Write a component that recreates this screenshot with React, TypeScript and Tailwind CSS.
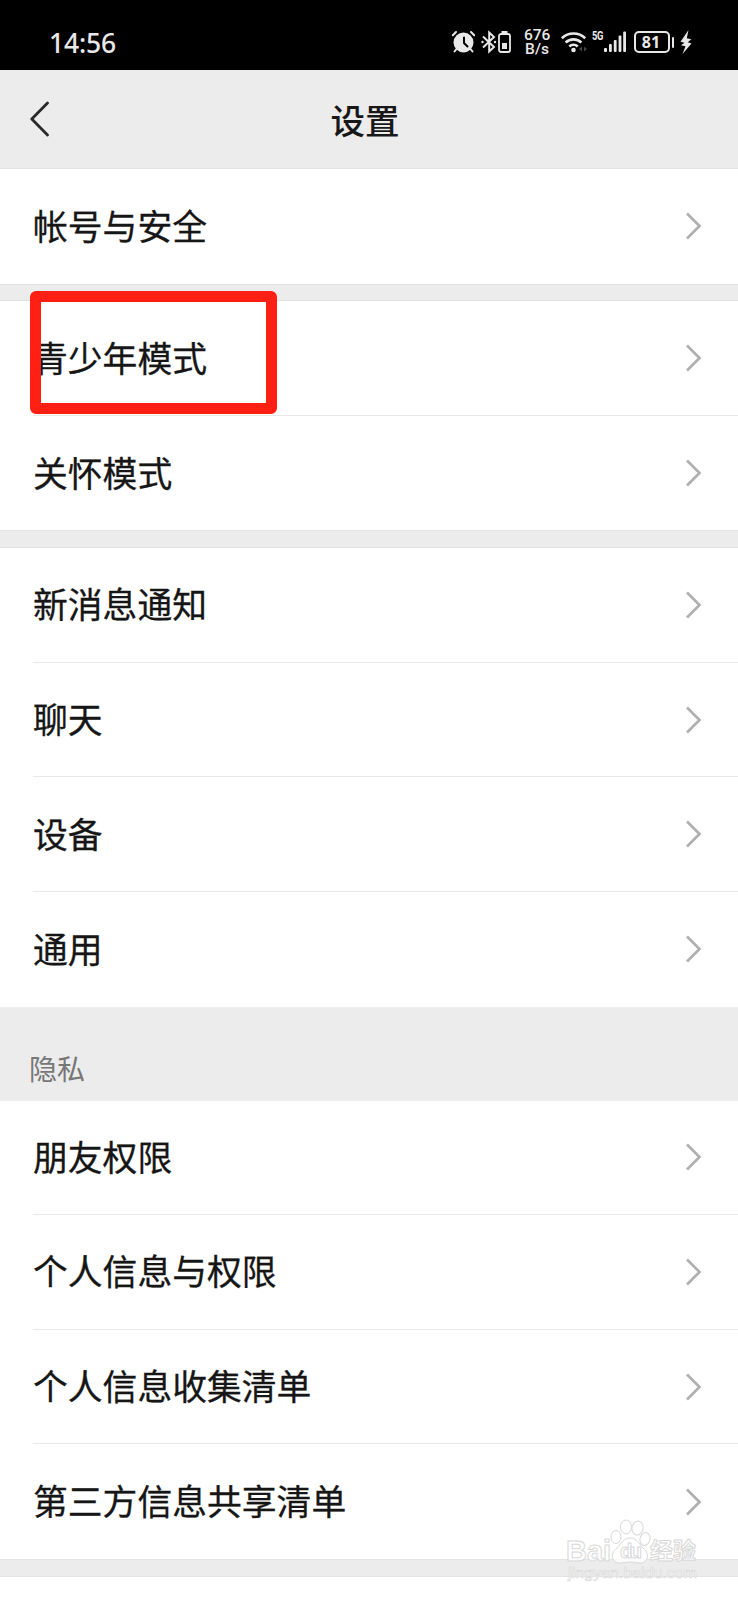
import React from 'react';

const FONT = "font-['Noto_Sans_CJK_SC','Noto_Sans',sans-serif]";

function StatusBar() {
  return (
    <header className="flex h-[69.5px] shrink-0 items-center bg-black pt-[15px] pl-[49px] font-['Noto_Sans','Noto_Sans_CJK_SC',sans-serif] text-[#e8e8e8]">
      <span className="w-[402px] pt-px text-[26.5px] leading-8 font-medium tracking-[-0.2px]">14:56</span>
      <svg className="h-6 w-6 shrink-0" viewBox="0 0 24 24" fill="none" stroke="#e8e8e8" strokeLinecap="round">
        <circle cx="12.5" cy="12.5" r="10" fill="#e8e8e8" stroke="none" />
        <path d="M1.8 5.2 5 2M23.2 5.2 20 2" strokeWidth="2" />
        <path d="M5.5 19 3.5 21.5M19.5 19l2 2.5" strokeWidth="2" />
        <path d="M13 7.5v5.5l3.5 3.5" stroke="#000" strokeWidth="2" />
      </svg>
      <svg className="ml-[6px] h-6 w-[16px] shrink-0" viewBox="0 0 16 24" fill="none" stroke="#e8e8e8" strokeWidth="2">
        <path d="M2 6.5 13 17 8.2 21.500V2.500L13 7 2 17.500" />
        <circle cx="1.500" cy="12" r="1.200" fill="#e8e8e8" stroke="none" />
        <circle cx="14" cy="12" r="1.200" fill="#e8e8e8" stroke="none" />
      </svg>
      <svg className="ml-px h-6 w-[13px] shrink-0" viewBox="0 0 13 24" fill="none" stroke="#e8e8e8" strokeWidth="1.8">
        <rect x="1" y="4" width="11" height="18" rx="2" />
        <path d="M3.500 2h6" strokeWidth="2" />
        <rect x="4" y="13" width="5" height="6" fill="#e8e8e8" stroke="none" />
      </svg>
      <div className="ml-[13px] w-[26px] shrink-0 text-center font-['Roboto',sans-serif] text-[15.500px] leading-[14.500px] font-medium">
        <div>676</div>
        <div>B/s</div>
      </div>
      <svg className="ml-[11px] h-6 w-[27px] shrink-0" viewBox="0 0 27 24" fill="none" stroke="#e8e8e8" strokeWidth="2.600">
        <path d="M.8 8.200a17 17 0 0 1 23.400 0M4.600 12.500a11.500 11.500 0 0 1 15.800 0M8.300 16.500a6 6 0 0 1 8.400 0" />
        <circle cx="12.500" cy="20" r="2.300" fill="#e8e8e8" stroke="none" />
        <path d="M21 16.500v5l-3-2.500zM23 16.500v5l3-2.500z" fill="#444" stroke="none" />
      </svg>
      <span className="ml-[4px] w-[12px] shrink-0 self-start pt-[15px] font-['Roboto',sans-serif] text-[12px] leading-[12px] font-bold tracking-[-0.500px]">
        <span className="inline-block origin-left scale-x-[0.78]">5G</span>
      </span>
      <svg className="h-6 w-[22px] shrink-0" viewBox="0 0 22 24" fill="#e8e8e8">
        <rect x="0" y="18" width="3" height="4" rx="1" />
        <rect x="5" y="14" width="2.800" height="8" rx="1" />
        <rect x="9.800" y="10" width="2.800" height="12" rx="1" />
        <rect x="14.600" y="5.500" width="2.800" height="16.500" rx="1" />
        <rect x="19.200" y="1.500" width="2.800" height="20.500" rx="1" />
      </svg>
      <div className="ml-[8px] flex h-[22px] w-[36px] shrink-0 items-center justify-center rounded-[5px] border-2 border-[#e8e8e8] pr-[2px] text-[16px] leading-none font-bold">81</div>
      <div className="ml-[2px] h-[11px] w-[2px] shrink-0 rounded-full bg-[#e8e8e8]" />
      <svg className="ml-[6px] h-6 w-3 shrink-0" viewBox="0 0 12 24" fill="#e8e8e8">
        <path d="M8.500 0 .5 11.800 4.500 12.800 1 15.200 5.500 16.200 2.500 24 11.500 13.400 7.700 12.300 11.300 9.300 6.800 8.200z" />
      </svg>
    </header>
  );
}

function TitleBar() {
  return (
    <div className="grid h-[99.500px] shrink-0 grid-cols-[1fr_auto_1fr] items-center border-b border-[#e2e2e2] pr-[38px] pl-[30px]">
      <svg className="h-[36px] w-[20px]" viewBox="0 0 20 36" fill="none" stroke="#2a2a2a" strokeWidth="2.800" strokeLinecap="round" strokeLinejoin="round">
        <path d="M17.500 2 1.800 18l15.700 16" />
      </svg>
      <h1 className="text-[34.500px] leading-[50px] font-medium text-[#181818]">设置</h1>
    </div>
  );
}

function Row({ label, highlighted, last }: { label: string; highlighted?: boolean; last?: boolean }) {
  return (
    <li className="relative flex h-[114.600px] pl-[33px]">
      <div className={`flex flex-1 items-center justify-between pr-[36.500px] ${last ? '' : 'border-b border-[#e9e9e9]'}`}>
        <span className="pb-[3px] text-[34.800px] leading-[50px] text-[#161616] [-webkit-text-stroke:0.300px_#161616]">{label}</span>
        <svg className="h-[28px] w-[17px]" viewBox="0 0 17 28" fill="none" stroke="#b0b0b0" strokeWidth="2.700">
          <path d="M2 1.500 14.500 14 2 26.500" />
        </svg>
      </div>
      {highlighted && (
        <div className="absolute top-[-10px] left-[30px] h-[122.500px] w-[247px] rounded-[6px] border-[11.500px] border-[#ff1f13]" />
      )}
    </li>
  );
}

function Group({ items, highlight }: { items: string[]; highlight?: string }) {
  return (
    <ul className="shrink-0 bg-white">
      {items.map((item, i) => (
        <Row key={item} label={item} highlighted={item === highlight} last={i === items.length - 1} />
      ))}
    </ul>
  );
}

function Divider() {
  return <div className="h-[17.700px] shrink-0 border-y border-[#e3e3e3]" />;
}

function Watermark() {
  return (
    <svg className="absolute top-[1515px] left-[562px] h-[85px] w-[144px]" viewBox="0 0 144 85" fill="#ffffff" fillOpacity="0.850" stroke="#d8d8d8" strokeWidth="1">
      <g fontFamily="Liberation Sans, sans-serif">
        <text x="4" y="46" fontSize="29" fontWeight="700" textLength="45">Bai</text>
        <path d="M68 23c7 0 9 6 13 10 8 7 4 15-3 15-4 0-6-1-10-1s-6 1-10 1c-8 0-11-9-3-15 4-4 6-10 13-10z" />
        <ellipse cx="54" cy="22" rx="5" ry="6.500" />
        <ellipse cx="64" cy="12" rx="5.500" ry="7" />
        <ellipse cx="75.500" cy="13" rx="5.500" ry="7" transform="rotate(10 75.500 13)" />
        <ellipse cx="83" cy="24" rx="5" ry="6.500" transform="rotate(15 83 24)" />
        <text x="58" y="43" fontSize="20" fontWeight="700" textLength="22">du</text>
      </g>
      <text x="88" y="44" fontSize="23" fontWeight="700" fontFamily="Noto Sans CJK SC, sans-serif" textLength="46">经验</text>
      <text x="6" y="63" fontSize="15" fontFamily="Liberation Sans, sans-serif" textLength="129" lengthAdjust="spacingAndGlyphs" strokeWidth="0.600">jingyan.baidu.com</text>
    </svg>
  );
}

export default function App() {
  return (
    <main className={`relative flex h-[1600px] w-[738px] flex-col overflow-hidden bg-[#ececec] ${FONT}`}>
      <StatusBar />
      <TitleBar />
      <Group items={['帐号与安全']} />
      <Divider />
      <Group items={['青少年模式', '关怀模式']} highlight="青少年模式" />
      <Divider />
      <Group items={['新消息通知', '聊天', '设备', '通用']} />
      <h2 className="flex h-[94px] shrink-0 items-end pb-[12px] pl-[29px] text-[28px] leading-[42px] text-[#777777]">隐私</h2>
      <Group items={['朋友权限', '个人信息与权限', '个人信息收集清单', '第三方信息共享清单']} />
      <Divider />
      <div className="flex-1 bg-white" />
      <Watermark />
    </main>
  );
}
